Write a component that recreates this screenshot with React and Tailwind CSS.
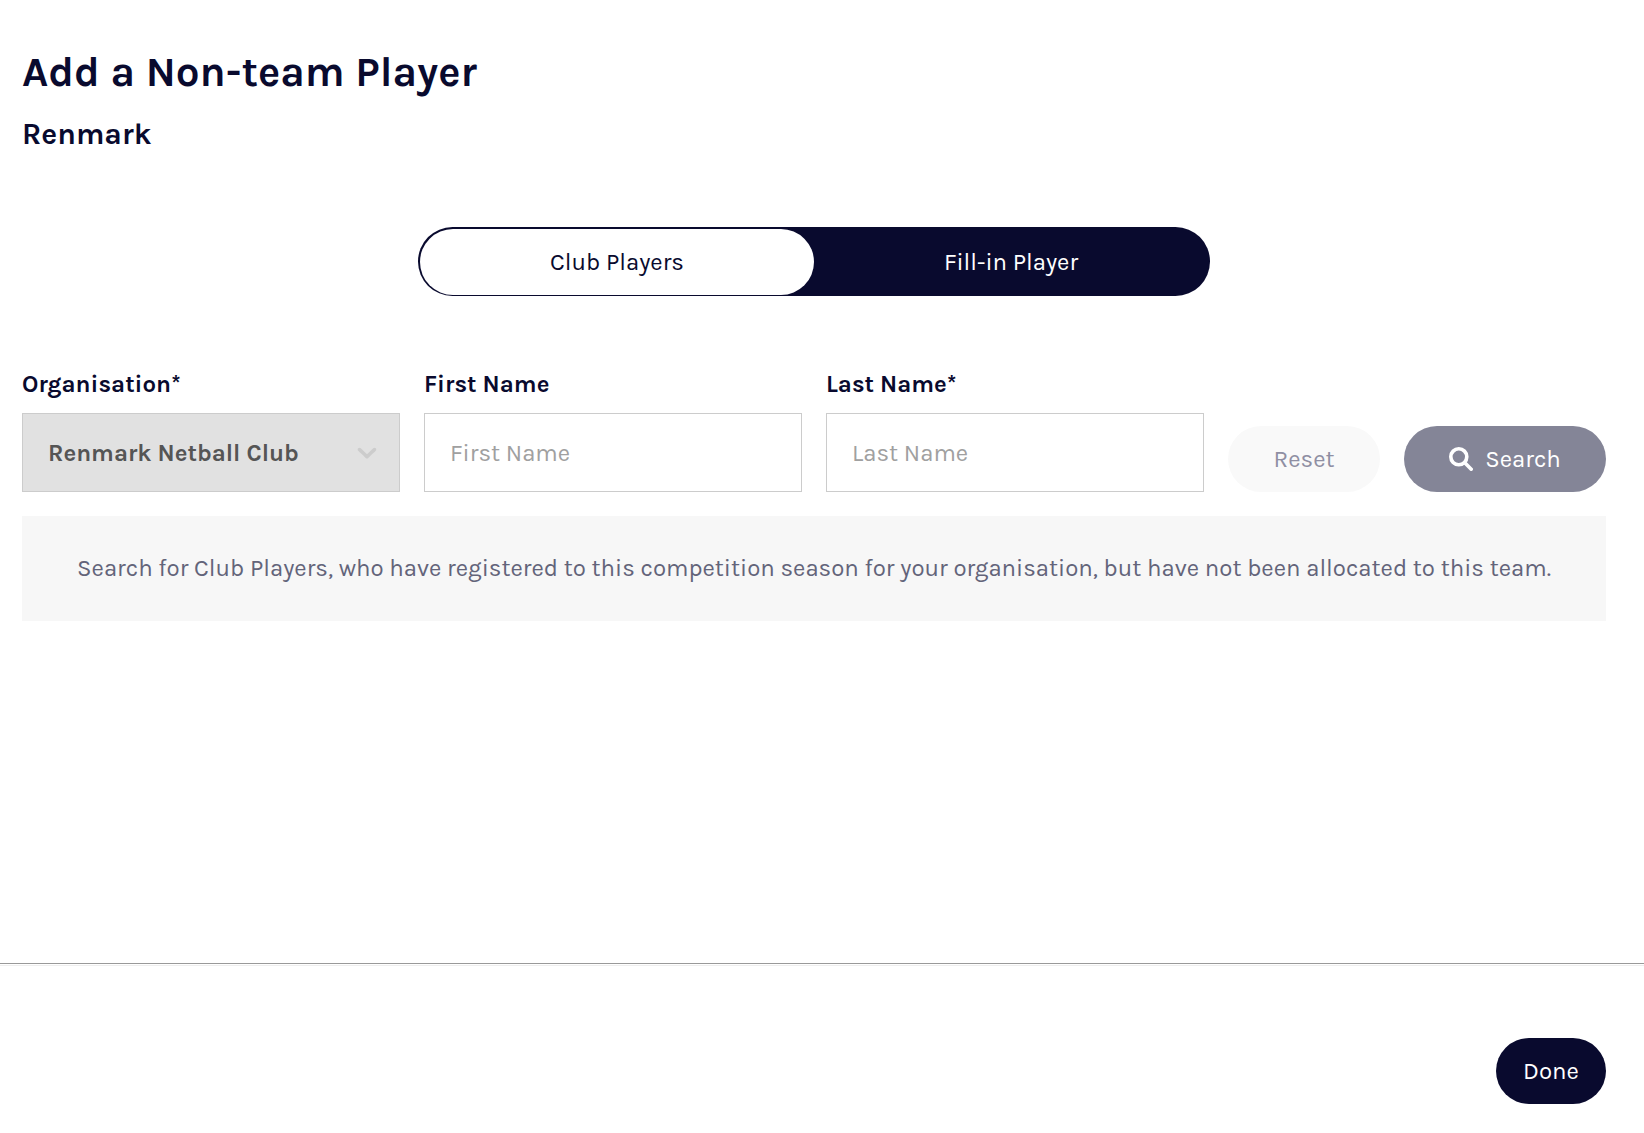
import React, { useState } from 'react';

const ChevronIcon = () => (
  <svg viewBox="0 0 20 20" fill="currentColor" className="w-8 h-8" aria-hidden="true">
    <path d="M4.516 7.048c0.436-0.446 1.043-0.481 1.576 0l3.908 3.747 3.908-3.747c0.533-0.481 1.141-0.446 1.574 0 0.436 0.445 0.408 1.197 0 1.615-0.406 0.418-4.695 4.502-4.695 4.502-0.217 0.223-0.502 0.335-0.787 0.335s-0.57-0.112-0.789-0.335c0 0-4.287-4.084-4.695-4.502s-0.436-1.17 0-1.615z" />
  </svg>
);

const SearchIcon = () => (
  <svg
    viewBox="0 0 24 24"
    fill="none"
    stroke="currentColor"
    strokeWidth="3.6"
    strokeLinecap="round"
    className="w-6 h-6"
    aria-hidden="true"
  >
    <circle cx="9.8" cy="9.8" r="8" />
    <path d="M15.8 15.8L22.2 22.2" />
  </svg>
);

const TextField = ({ id, label, placeholder, value, onChange }) => (
  <div className="flex-1 min-w-0">
    <label htmlFor={id} className="block mb-[13px] leading-8 font-bold">
      {label}
    </label>
    <input
      id={id}
      type="text"
      className="block w-full h-[79px] px-[25px] border border-[#cccccc] bg-white placeholder:text-[#a0a0a0] placeholder:opacity-100"
      placeholder={placeholder}
      value={value}
      onChange={(e) => onChange(e.target.value)}
    />
  </div>
);

const App = () => {
  const [tab, setTab] = useState('club');
  const [firstName, setFirstName] = useState('');
  const [lastName, setLastName] = useState('');

  const canSearch = lastName.trim() !== '';
  const canReset = firstName !== '' || lastName !== '';

  const resetForm = () => {
    setFirstName('');
    setLastName('');
  };

  const renderTab = (key, label) => (
    <button
      type="button"
      aria-pressed={tab === key}
      onClick={() => setTab(key)}
      className={`flex-1 h-full rounded-full ${
        tab === key ? 'bg-white text-[#090a2e]' : 'text-white'
      }`}
    >
      {label}
    </button>
  );

  return (
    <div className="flex flex-col min-h-screen bg-white text-[#090a2e] text-2xl font-['Karla','Inter','Liberation_Sans',sans-serif]">
      <main className="flex-1 pt-12 pl-[22px] pr-[38px]">
        <h1 className="text-[42px] leading-[48px] font-bold">Add a Non-team Player</h1>
        <h2 className="mt-5 text-[30px] leading-9 font-bold">Renmark</h2>

        <div className="flex w-1/2 h-[69px] mx-auto mt-[75px] px-[2px] pt-[2px] pb-px rounded-full bg-[#090a2e]">
          {renderTab('club', 'Club Players')}
          {renderTab('fillin', 'Fill-in Player')}
        </div>

        <form
          className="flex items-end gap-6 mt-[72px]"
          onSubmit={(e) => e.preventDefault()}
        >
          <div className="flex-1 min-w-0">
            <label htmlFor="organisation" className="block mb-[13px] leading-8 font-bold">
              Organisation*
            </label>
            <div className="grid items-center h-[79px] border border-[#cccccc] bg-[#e1e1e1]">
              <select
                id="organisation"
                disabled
                className="col-start-1 row-start-1 w-full h-full pl-[25px] pr-12 appearance-none font-bold text-[#555555]"
              >
                <option>Renmark Netball Club</option>
              </select>
              <span className="col-start-1 row-start-1 justify-self-end mr-4 text-[#cccccc] pointer-events-none">
                <ChevronIcon />
              </span>
            </div>
          </div>
          <TextField
            id="first-name"
            label="First Name"
            placeholder="First Name"
            value={firstName}
            onChange={setFirstName}
          />
          <TextField
            id="last-name"
            label="Last Name*"
            placeholder="Last Name"
            value={lastName}
            onChange={setLastName}
          />
          <button
            type="button"
            disabled={!canReset}
            onClick={resetForm}
            className="w-[152px] h-[66px] rounded-full bg-[#f3f3f3] disabled:bg-[#f9f9f9] disabled:text-[#8f8fa3]"
          >
            Reset
          </button>
          <button
            type="submit"
            disabled={!canSearch}
            className="flex items-center justify-center gap-3 w-[202px] h-[66px] rounded-full bg-[#090a2e] text-white disabled:bg-[#848597]"
          >
            <SearchIcon />
            Search
          </button>
        </form>

        <p className="mt-6 py-9 px-6 bg-[#f7f7f7] text-center leading-[33px] text-[#63647a]">
          Search for Club Players, who have registered to this competition season for your
          organisation, but have not been allocated to this team.
        </p>
      </main>

      <footer className="h-[170px] pt-px border-t border-[#999999]">
        <div className="flex justify-end pt-[72px] pr-[38px] border-t border-[#eeeeee]">
          <button type="button" className="w-[110px] h-[66px] rounded-full bg-[#090a2e] text-white">
            Done
          </button>
        </div>
      </footer>
    </div>
  );
};

export default App;
